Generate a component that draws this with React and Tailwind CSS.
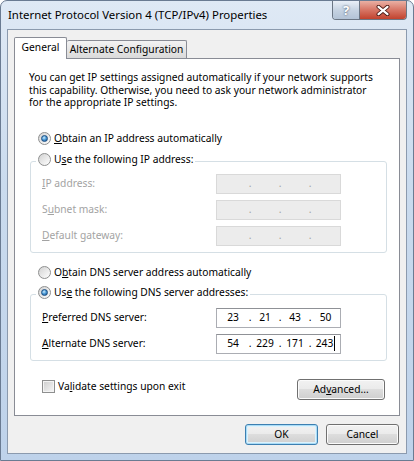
import { Fragment } from "react";

const font = { fontFamily: '"Noto Sans", "Liberation Sans", sans-serif' };

const Radio = ({ checked }) => (
	<span className="flex h-[13px] w-[13px] shrink-0 items-center justify-center rounded-full border border-[#8e8f8f] bg-[linear-gradient(135deg,#d2d2d2,#ffffff)]">
		{checked && (
			<span className="h-[7px] w-[7px] rounded-full border border-[#1d4f82] bg-[radial-gradient(circle_at_40%_35%,#d0ecfc_0%,#4d9cd8_45%,#104a8a_100%)]" />
		)}
	</span>
);

const Check = () => (
	<span className="flex h-[13px] w-[13px] shrink-0 border border-[#8e8f8f] bg-[linear-gradient(135deg,#cdcdcd,#f7f7f7)] shadow-[inset_0_0_0_1px_#f4f4f4]" />
);

const IpBox = ({ parts, disabled, caret }) => (
	<div
		className={
			"grid h-[20px] w-[125px] grid-cols-[32px_2px_28px_2px_28px_2px_29px] items-center border " +
			(disabled
				? "border-[#d9d9d9] bg-[#ececec] text-[#a3a3a3]"
				: "border-[#abadb3] border-t-[#8f9196] bg-white text-black")
		}
	>
		{parts.map((p, i) => (
			<Fragment key={i}>
				<span className="flex items-center justify-center whitespace-nowrap">
					{p}
					{caret && i === 3 && <span className="ml-px h-[15px] w-px bg-black" />}
				</span>
				{i < 3 && <span className="flex justify-center">.</span>}
			</Fragment>
		))}
	</div>
);

const Btn = ({ children, def, className = "" }) => (
	<button
		className={
			"flex items-center justify-center rounded-[3px] border bg-[linear-gradient(#f2f2f2_0%,#ebebeb_45%,#dddddd_50%,#cfcfcf_100%)] " +
			(def
				? "border-[#3c7fb1] shadow-[inset_0_0_0_1px_#aadcf6,inset_0_0_0_2px_#dcf2fd] "
				: "border-[#707070] shadow-[inset_0_0_0_1px_#fbfbfb] ") +
			className
		}
	>
		{children}
	</button>
);

const Row = ({ label, disabled, parts, caret }) => (
	<div className="flex h-[20px] items-center">
		<span className={"w-[174px] " + (disabled ? "text-[#a3a3a3]" : "text-black")}>{label}</span>
		<IpBox parts={parts} disabled={disabled} caret={caret} />
	</div>
);

const Legend = ({ checked, children }) => (
	<div className="relative z-10 ml-[7px] flex h-[14px] w-fit items-center gap-[3px] bg-white px-[2px]">
		<Radio checked={checked} />
		<span>{children}</span>
	</div>
);

const empty = ["", "", "", ""];

export default function App() {
	return (
		<div
			style={font}
			className="h-[461px] w-[414px] overflow-hidden rounded-t-[7px] border border-[#6a7b92] bg-[linear-gradient(#dfe9f5,#cadbee_40%,#bed2ea)] text-[10.25px] text-black"
		>
			<div className="flex h-[28px] items-start justify-between">
				<div className="pl-[7px] pt-[5px] text-[11.4px] leading-[18px]">
					Internet Protocol Version 4 (TCP/IPv4) Properties
				</div>
				<div className="mr-[6px] flex h-[19px] overflow-hidden rounded-b-[4px] border border-t-0 border-[#6b7684]">
					<div className="flex w-[27px] items-center justify-center border-r border-[#6b7684] bg-[linear-gradient(#e9eff7,#c6d3e2_50%,#b3c3d6)] text-[13px] font-bold leading-none text-white [text-shadow:0_0_2px_#2e3d52]">
						?
					</div>
					<div className="flex w-[46px] items-center justify-center bg-[linear-gradient(#eab0a4,#d77565_50%,#c2432e)]">
						<svg width="14" height="11" viewBox="0 0 14 11">
							<path d="M2.5 1.8 L11.5 9.2 M11.5 1.8 L2.5 9.2" stroke="#4a1a14" strokeWidth="4" strokeLinecap="round" />
							<path d="M2.5 1.8 L11.5 9.2 M11.5 1.8 L2.5 9.2" stroke="#ffffff" strokeWidth="2.2" strokeLinecap="round" />
						</svg>
					</div>
				</div>
			</div>

			<div className="mx-[6px] flex h-[425px] flex-col border border-[#8b9aae] bg-[#f0f0f0] px-[6px] pt-[7px]">
				<div className="flex h-[21px] items-end">
					<div className="relative z-10 -mb-px flex h-[22px] w-[53px] items-center justify-center rounded-t-[2px] border border-b-0 border-[#898c95] bg-white pb-[2px]">
						General
					</div>
					<div className="flex h-[18px] w-[120px] items-center justify-center rounded-t-[2px] border border-b-0 border-l-0 border-[#898c95] bg-[linear-gradient(#f3f3f3,#e6e6e6_50%,#dadada)]">
						Alternate Configuration
					</div>
				</div>

				<div className="flex h-[358px] w-[386px] flex-col border border-[#898c95] bg-white pl-[14px] pt-[12px]">
					<p className="whitespace-nowrap leading-[12.6px]">
						You can get IP settings assigned automatically if your network supports
						<br />
						this capability. Otherwise, you need to ask your network administrator
						<br />
						for the appropriate IP settings.
					</p>

					<label className="ml-[9px] mt-[23px] flex h-[14px] items-center gap-[3px]">
						<Radio checked />
						<span>
							<u>O</u>btain an IP address automatically
						</span>
					</label>

					<div className="mt-[7px] flex flex-col">
						<Legend>
							U<u>s</u>e the following IP address:
						</Legend>
						<div className="-mt-[6px] ml-px flex w-[357px] flex-col gap-[6px] rounded-[3px] border border-[#d5dfe5] pb-[6px] pl-[11px] pt-[12px]">
							<Row label={<><u>I</u>P address:</>} disabled parts={empty} />
							<Row label={<>S<u>u</u>bnet mask:</>} disabled parts={empty} />
							<Row label={<><u>D</u>efault gateway:</>} disabled parts={empty} />
						</div>
					</div>

					<label className="ml-[9px] mt-[13px] flex h-[14px] items-center gap-[3px]">
						<Radio />
						<span>
							O<u>b</u>tain DNS server address automatically
						</span>
					</label>

					<div className="mt-[6px] flex flex-col">
						<Legend checked>
							Us<u>e</u> the following DNS server addresses:
						</Legend>
						<div className="-mt-[6px] ml-px flex w-[357px] flex-col gap-[6px] rounded-[3px] border border-[#d5dfe5] pb-[6px] pl-[11px] pt-[13px]">
							<Row label={<><u>P</u>referred DNS server:</>} parts={["23", "21", "43", "50"]} />
							<Row label={<><u>A</u>lternate DNS server:</>} parts={["54", "229", "171", "243"]} caret />
						</div>
					</div>

					<div className="mt-[19px] flex items-start justify-between pl-[13px] pr-[14px]">
						<label className="flex h-[14px] items-center gap-[3px]">
							<Check />
							<span>
								Va<u>l</u>idate settings upon exit
							</span>
						</label>
						<Btn className="-mt-[1px] h-[21px] w-[88px]">
							Ad<u>v</u>anced...
						</Btn>
					</div>
				</div>

				<div className="mt-[8px] flex justify-end gap-[8px] pr-[1px]">
					<Btn def className="h-[21px] w-[73px]">
						OK
					</Btn>
					<Btn className="h-[21px] w-[73px]">Cancel</Btn>
				</div>
			</div>
		</div>
	);
}
